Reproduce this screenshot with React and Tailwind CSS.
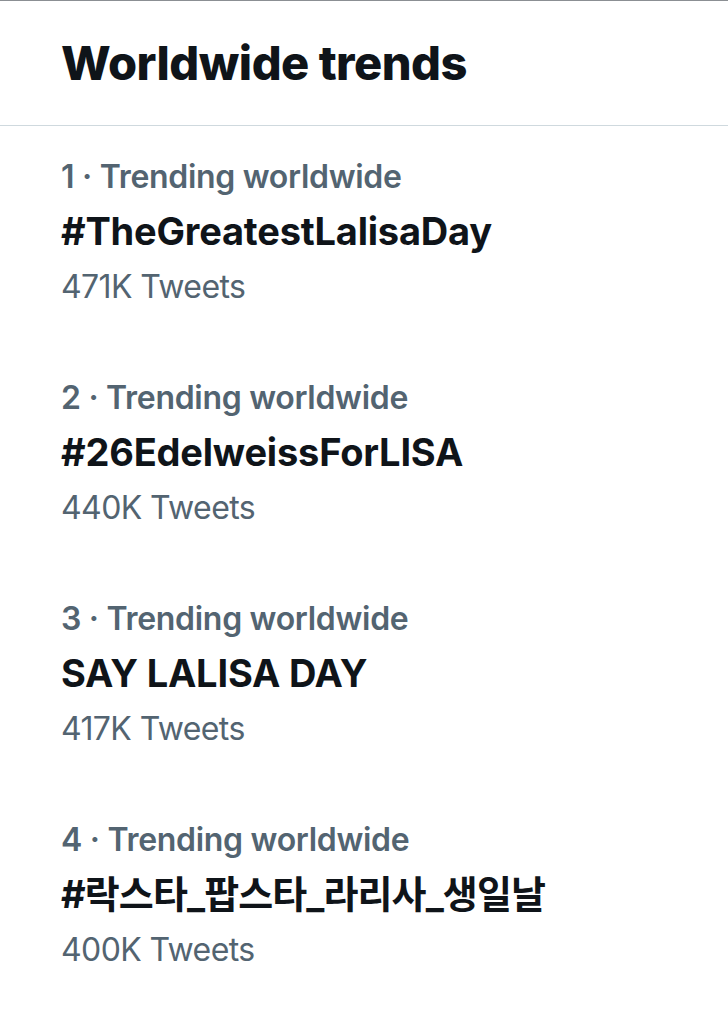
const trends = [
  { rank: 1, name: '#TheGreatestLalisaDay', count: '471K Tweets', track: 'tracking-[-0.2px]' },
  { rank: 2, name: '#26EdelweissForLISA', count: '440K Tweets', track: 'tracking-[-0.2px]' },
  { rank: 3, name: 'SAY LALISA DAY', count: '417K Tweets', track: 'tracking-[-0.2px]' },
  { rank: 4, name: '#락스타_팝스타_라리사_생일날', count: '400K Tweets', track: 'tracking-[-0.9px]' },
];

const App = () => {
  return (
    <div
      className="w-[728px] h-[1020px] bg-white border-t border-[#8b8f93] overflow-hidden"
      style={{ fontFamily: 'Inter, "Noto Sans CJK KR", sans-serif' }}
    >
      {/* Header */}
      <div className="h-[125px] flex items-center px-[61px] border-b border-[#cfd9de]">
        <h1 className="text-[47px] font-extrabold text-[#0f1419] tracking-[-0.5px]">
          Worldwide trends
        </h1>
      </div>

      {/* Trend list */}
      <div>
        {trends.map((t) => (
          <div key={t.rank} className="px-[61px] pt-[23px] pb-[33px]">
            <div className="text-[32px] leading-[55px] font-semibold text-[#536471] tracking-[-0.3px]">
              {t.rank} · Trending worldwide
            </div>
            <div className={`text-[38px] leading-[55px] font-bold text-[#0f1419] ${t.track}`}>
              {t.name}
            </div>
            <div className="text-[32px] leading-[55px] text-[#536471] tracking-[-0.6px]">
              {t.count}
            </div>
          </div>
        ))}
      </div>
    </div>
  );
};

export default App;
